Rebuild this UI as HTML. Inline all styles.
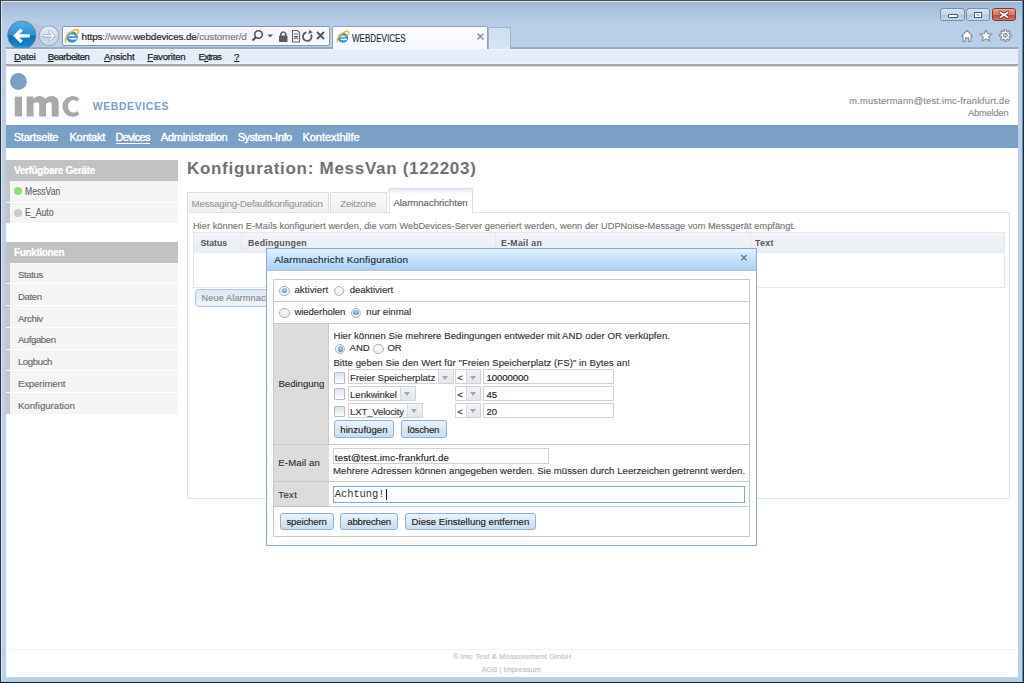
<!DOCTYPE html>
<html><head><meta charset="utf-8"><style>
html,body{margin:0;padding:0;width:1024px;height:683px;overflow:hidden;position:relative;font-family:"Liberation Sans",sans-serif}
u{text-decoration:underline}
.t{-webkit-text-stroke:0.15px currentColor}
</style></head><body>
<div style="position:absolute;left:0px;top:0px;width:1024px;height:683px;background:#b9d0e8"></div>
<div style="position:absolute;left:0px;top:0px;width:1024px;height:47px;background:linear-gradient(#9bb4d1 0px,#a9c1dc 10px,#b6cce5 20px,#b9d0e8 30px,#b9d0e8 47px)"></div>
<div style="position:absolute;left:0px;top:0px;width:1024px;height:1px;background:#4a4d52"></div>
<div style="position:absolute;left:0px;top:1px;width:1024px;height:1px;background:#dbe6f2"></div>
<div style="position:absolute;left:0px;top:0px;width:1px;height:683px;background:#2e3035"></div>
<div style="position:absolute;left:1px;top:1px;width:1px;height:682px;background:#dfe9f4"></div>
<div style="position:absolute;left:1023px;top:0px;width:1px;height:683px;background:#1b2a2e"></div>
<div style="position:absolute;left:1022px;top:1px;width:1px;height:682px;background:#5b8fb0"></div>
<div style="position:absolute;left:0px;top:682px;width:1024px;height:1px;background:#10242a"></div>
<div style="position:absolute;left:1px;top:681px;width:1022px;height:1px;background:#8fd8ea"></div>
<div style="position:absolute;left:6px;top:46px;width:1012px;height:1px;background:#b7d1ea"></div>
<div style="position:absolute;left:6px;top:47px;width:1012px;height:2px;background:#98abc1"></div>
<div style="position:absolute;left:6px;top:49px;width:1012px;height:1px;background:#eef5fc"></div>
<div style="position:absolute;left:6px;top:50px;width:1012px;height:14px;background:#e5edf8"></div>
<div style="position:absolute;left:6px;top:63px;width:1012px;height:1px;background:#ebf3fb"></div>
<div style="position:absolute;left:6px;top:64px;width:1012px;height:2px;background:#a2a6ab"></div>
<div style="position:absolute;left:6px;top:66px;width:1012px;height:1px;background:#d9dbde"></div>
<div style="position:absolute;left:6px;top:67px;width:1012px;height:610px;background:#fff"></div>
<div style="position:absolute;left:940px;top:8px;width:25px;height:13px;border-radius:3px;border:1px solid #7b8fa6;box-sizing:border-box;background:linear-gradient(#d9e6f3,#c2d5ea 50%,#aec6e0 51%,#c4d8ec)"></div>
<div style="position:absolute;left:948px;top:14px;width:8px;height:2px;background:#fff;border:1px solid #4d5c6d;border-radius:1px;box-sizing:content-box"></div>
<div style="position:absolute;left:966px;top:8px;width:24px;height:13px;border-radius:3px;border:1px solid #7b8fa6;box-sizing:border-box;background:linear-gradient(#d9e6f3,#c2d5ea 50%,#aec6e0 51%,#c4d8ec)"></div>
<div style="position:absolute;left:974px;top:11.5px;width:8px;height:6px;background:#6a7a8c;border:1px solid #4d5c6d;box-shadow:inset 0 0 0 1.5px #fff;box-sizing:border-box"></div>
<div style="position:absolute;left:992px;top:8px;width:24px;height:13px;border-radius:3px;border:1px solid #7d3a33;box-sizing:border-box;background:linear-gradient(#e9a99b,#d77462 50%,#c2432d 51%,#d8785f)"></div>
<svg style="position:absolute;left:998px;top:9px" width="12" height="11" viewBox="0 0 12 11"><path d="M2.3 3.4 L9.7 8.2 M9.7 3.4 L2.3 8.2" stroke="#5a2a25" stroke-width="3.2" stroke-linecap="round"/><path d="M2.3 3.4 L9.7 8.2 M9.7 3.4 L2.3 8.2" stroke="#fff" stroke-width="1.8" stroke-linecap="round"/></svg>
<svg style="position:absolute;left:958px;top:28px" width="60" height="16" viewBox="0 0 60 16">
<g stroke="#8a929b" stroke-width="1.2" stroke-linejoin="round" fill="#fff">
<path d="M3.6 8.2 L9 2.3 L14.4 8.2 L13 8.2 L13 13.3 L10.6 13.3 L10.6 9.8 L7.4 9.8 L7.4 13.3 L5 13.3 L5 8.2 Z"/>
<path d="M28.00 1.70 L29.70 5.65 L33.99 6.05 L30.76 8.90 L31.70 13.10 L28.00 10.90 L24.30 13.10 L25.24 8.90 L22.01 6.05 L26.30 5.65 Z"/>
<path d="M51.48 6.38 L53.21 6.38 L53.21 8.42 L51.48 8.42 L50.98 9.63 L52.20 10.86 L50.76 12.30 L49.53 11.08 L48.32 11.58 L48.32 13.31 L46.28 13.31 L46.28 11.58 L45.07 11.08 L43.84 12.30 L42.40 10.86 L43.62 9.63 L43.12 8.42 L41.39 8.42 L41.39 6.38 L43.12 6.38 L43.62 5.17 L42.40 3.94 L43.84 2.50 L45.07 3.72 L46.28 3.22 L46.28 1.49 L48.32 1.49 L48.32 3.22 L49.53 3.72 L50.76 2.50 L52.20 3.94 L50.98 5.17 Z"/>
</g>
<circle cx="47.3" cy="7.4" r="1.9" fill="#b9d0e8" stroke="#8a929b" stroke-width="1.1"/>
</svg>
<svg style="position:absolute;left:6px;top:19px" width="56" height="29" viewBox="0 0 56 29">
<defs>
<linearGradient id="bk" x1="0" y1="0" x2="0" y2="1"><stop offset="0" stop-color="#52b0ea"/><stop offset="0.5" stop-color="#2a90d6"/><stop offset="0.52" stop-color="#0c70bf"/><stop offset="0.85" stop-color="#1a80cc"/><stop offset="1" stop-color="#4aa8e4"/></linearGradient>
<linearGradient id="fw" x1="0" y1="0" x2="0" y2="1"><stop offset="0" stop-color="#e3ecf6"/><stop offset="0.5" stop-color="#d3e0ee"/><stop offset="0.52" stop-color="#c3d4e6"/><stop offset="1" stop-color="#d0deec"/></linearGradient>
</defs>
<path d="M16 2.5 Q26 2.5 33 6 Q38 8.5 43 6.8 L49 6.8 L49 27 L16 27 Z" fill="#b2c5da"/>
<circle cx="43" cy="16.7" r="9.8" fill="url(#fw)" stroke="#97a6b6" stroke-width="1"/>
<path d="M38.3 16.8 H47.3 M43.8 12.6 L47.8 16.8 L43.8 21" fill="none" stroke="#a3b1c0" stroke-width="3.2" stroke-linecap="round" stroke-linejoin="round"/>
<path d="M38.3 16.8 H47.3 M43.8 12.6 L47.8 16.8 L43.8 21" fill="none" stroke="#f4f7fb" stroke-width="1.6" stroke-linecap="round" stroke-linejoin="round"/>
<circle cx="15.8" cy="16.2" r="14.1" fill="url(#bk)" stroke="#6b8199" stroke-width="1"/>
<path d="M9.6 16.8 H23.8 M15.6 10.6 L9.4 16.8 L15.6 23" fill="none" stroke="#fff" stroke-width="3.3" stroke-linecap="butt" stroke-linejoin="miter"/>
</svg>
<div style="position:absolute;left:62px;top:26px;width:268px;height:20px;box-sizing:border-box;border:1px solid #8396ab;border-radius:2px;background:#f3f6fa;box-shadow:inset 0 0 0 1px #fff"></div>
<svg style="position:absolute;left:64px;top:28px" width="16" height="16" viewBox="0 0 16 16">
<ellipse cx="8" cy="9" rx="5.8" ry="5.6" fill="#2d8fd8"/>
<ellipse cx="8" cy="9" rx="3.4" ry="2.8" fill="#e8f4fc"/>
<rect x="4.6" y="8.3" width="7" height="1.6" fill="#2d8fd8"/>
<rect x="8.6" y="9.9" width="4" height="1.6" fill="#f3f6fa"/>
<path d="M2 14 Q0 10 6 5 Q12 0 14 2 Q15.5 4 12 7" fill="none" stroke="#f2b619" stroke-width="1.5"/>
</svg>
<svg style="position:absolute;left:250px;top:28px" width="78" height="16" viewBox="0 0 78 16">
<g fill="none" stroke="#555" stroke-width="1.6"><circle cx="8.5" cy="6.5" r="3.8"/><path d="M5.8 9.2 L2.5 12.5" stroke-width="2"/></g>
<path d="M17.5 6.5 L23 6.5 L20.25 9.5 Z" fill="#555"/>
<g fill="#5a5a5a"><rect x="29" y="7.5" width="8.5" height="6.5" rx="1"/></g>
<path d="M30.8 8 V5.8 Q33.25 2.2 35.7 5.8 V8" fill="none" stroke="#5a5a5a" stroke-width="1.6"/>
<g fill="none" stroke="#6a6a6a" stroke-width="1.1"><path d="M42.5 2.5 H47.5 L49.5 4.5 V14 H42.5 Z"/><path d="M44 6 H48 M44 8.5 H48 M44 11 L46 9.5 L48 11"/></g>
<path d="M61 6.5 A4.3 4.3 0 1 1 56.4 4.4" fill="none" stroke="#5a5a5a" stroke-width="1.8"/>
<path d="M59.5 1.5 L62.5 4.5 L58.5 6 Z" fill="#5a5a5a"/>
<path d="M67 4 L74 11 M74 4 L67 11" stroke="#555" stroke-width="1.8"/>
</svg>
<div style="position:absolute;left:332px;top:26px;width:156px;height:23px;box-sizing:border-box;border:1px solid #8ea3ba;border-bottom:none;border-radius:2px 2px 0 0;background:linear-gradient(#fdfeff,#f4f7fb)"></div>
<svg style="position:absolute;left:336px;top:30px" width="14" height="14" viewBox="0 0 16 16">
<ellipse cx="8" cy="9" rx="5.8" ry="5.6" fill="#2d8fd8"/>
<ellipse cx="8" cy="9" rx="3.4" ry="2.8" fill="#e8f4fc"/>
<rect x="4.6" y="8.3" width="7" height="1.6" fill="#2d8fd8"/>
<rect x="8.6" y="9.9" width="4" height="1.6" fill="#fff"/>
<path d="M2 14 Q0 10 6 5 Q12 0 14 2 Q15.5 4 12 7" fill="none" stroke="#f2b619" stroke-width="1.5"/>
</svg>
<svg style="position:absolute;left:476px;top:32px" width="9" height="9" viewBox="0 0 9 9"><path d="M1.5 1.5 L7.5 7.5 M7.5 1.5 L1.5 7.5" stroke="#8a8a8a" stroke-width="1.4"/></svg>
<div style="position:absolute;left:488px;top:27px;width:23px;height:22px;box-sizing:border-box;border:1px solid #9fb3c9;border-bottom:none;border-radius:2px 2px 0 0;background:linear-gradient(#cfdff0,#d8e6f4)"></div>
<div id="t0" class="t" style="position:absolute;left:14px;top:52.27px;font:normal 9.6px/1 'Liberation Sans', sans-serif;color:#1e1e1e;white-space:nowrap;letter-spacing:-0.125px;-webkit-text-stroke:0.25px #1e1e1e;"><u>D</u>atei</div>
<div id="t1" class="t" style="position:absolute;left:47.7px;top:52.27px;font:normal 9.6px/1 'Liberation Sans', sans-serif;color:#1e1e1e;white-space:nowrap;letter-spacing:-0.467px;-webkit-text-stroke:0.25px #1e1e1e;"><u>B</u>earbeiten</div>
<div id="t2" class="t" style="position:absolute;left:104.1px;top:52.27px;font:normal 9.6px/1 'Liberation Sans', sans-serif;color:#1e1e1e;white-space:nowrap;letter-spacing:-0.167px;-webkit-text-stroke:0.25px #1e1e1e;"><u>A</u>nsicht</div>
<div id="t3" class="t" style="position:absolute;left:147.3px;top:52.27px;font:normal 9.6px/1 'Liberation Sans', sans-serif;color:#1e1e1e;white-space:nowrap;letter-spacing:-0.200px;-webkit-text-stroke:0.25px #1e1e1e;"><u>F</u>avoriten</div>
<div id="t4" class="t" style="position:absolute;left:198.6px;top:52.27px;font:normal 9.6px/1 'Liberation Sans', sans-serif;color:#1e1e1e;white-space:nowrap;letter-spacing:-0.820px;-webkit-text-stroke:0.25px #1e1e1e;">E<u>x</u>tras</div>
<div id="t5" class="t" style="position:absolute;left:234.1px;top:52.27px;font:normal 9.6px/1 'Liberation Sans', sans-serif;color:#1e1e1e;white-space:nowrap;letter-spacing:0.000px;-webkit-text-stroke:0.25px #1e1e1e;"><u>?</u></div>
<div id="t6" class="t" style="position:absolute;left:81.6px;top:32.12px;font:normal 9.9px/1 'Liberation Sans', sans-serif;color:#222;white-space:nowrap;letter-spacing:-0.143px;">https<span style="color:#7a7a7a">://www.</span>webdevices.de<span style="color:#7a7a7a">/customer/d</span></div>
<div id="t7" class="t" style="position:absolute;left:352.2px;top:33.50px;font:normal 10.4px/1 'Liberation Sans', sans-serif;color:#1e2a4a;white-space:nowrap;letter-spacing:0.000px;transform:scaleX(0.775);transform-origin:0 0;">WEBDEVICES</div>
<svg style="position:absolute;left:6px;top:67px" width="90" height="55" viewBox="6 67 90 55">
<circle cx="18.4" cy="81.5" r="8.4" fill="#7aa0c5"/>
<g fill="#a9a9a9">
<rect x="14.8" y="96.6" width="7.3" height="19.8"/>
<path d="M26.6 116.4 V96.4 H33.4 V98.6 Q35.6 96.0 39.3 96.0 Q43.2 96.0 45.0 98.8 Q47.4 96.0 51.5 96.0 Q58.7 96.0 58.7 103.5 V116.4 H51.7 V104.6 Q51.7 102.2 49.3 102.2 Q46.1 102.2 46.1 105.0 V116.4 H39.2 V104.6 Q39.2 102.2 36.6 102.2 Q33.5 102.2 33.5 105.0 V116.4 Z"/>
</g>
<path d="M79.4 98.6 A10.3 10.35 0 1 0 79.4 114.3 L77.3 111 A5.6 6.3 0 1 1 77.3 101.6 Z" fill="#a9a9a9"/>
</svg>
<div id="t8" class="b" style="position:absolute;left:92.8px;top:101.70px;font:bold 10.4px/1 'Liberation Sans', sans-serif;color:#7b9fc3;white-space:nowrap;letter-spacing:0.644px;">WEBDEVICES</div>
<div id="t9" class="t" style="position:absolute;left:849.3px;top:96.71px;font:normal 9.2px/1 'Liberation Sans', sans-serif;color:#8a8a8a;white-space:nowrap;letter-spacing:0.258px;">m.mustermann@test.imc-frankfurt.de</div>
<div id="t10" class="t" style="position:absolute;left:968px;top:108.71px;font:normal 9.2px/1 'Liberation Sans', sans-serif;color:#8a8a8a;white-space:nowrap;letter-spacing:-0.114px;">Abmelden</div>
<div style="position:absolute;left:6px;top:125px;width:1012px;height:23px;background:#7aa0c6"></div>
<div id="t11" class="t" style="position:absolute;left:13.7px;top:132.39px;font:normal 11px/1 'Liberation Sans', sans-serif;color:#fff;white-space:nowrap;letter-spacing:-0.200px;-webkit-text-stroke:0.4px #fff;">Startseite</div>
<div id="t12" class="t" style="position:absolute;left:69.4px;top:132.39px;font:normal 11px/1 'Liberation Sans', sans-serif;color:#fff;white-space:nowrap;letter-spacing:-0.233px;-webkit-text-stroke:0.4px #fff;">Kontakt</div>
<div id="t13" class="t" style="position:absolute;left:115.6px;top:132.39px;font:normal 11px/1 'Liberation Sans', sans-serif;color:#fff;white-space:nowrap;letter-spacing:-0.717px;-webkit-text-stroke:0.4px #fff;">Devices</div>
<div id="t14" class="t" style="position:absolute;left:160.8px;top:132.39px;font:normal 11px/1 'Liberation Sans', sans-serif;color:#fff;white-space:nowrap;letter-spacing:-0.215px;-webkit-text-stroke:0.4px #fff;">Administration</div>
<div id="t15" class="t" style="position:absolute;left:237.7px;top:132.39px;font:normal 11px/1 'Liberation Sans', sans-serif;color:#fff;white-space:nowrap;letter-spacing:-0.420px;-webkit-text-stroke:0.4px #fff;">System-Info</div>
<div id="t16" class="t" style="position:absolute;left:302.4px;top:132.39px;font:normal 11px/1 'Liberation Sans', sans-serif;color:#fff;white-space:nowrap;letter-spacing:-0.027px;-webkit-text-stroke:0.4px #fff;">Kontexthilfe</div>
<div style="position:absolute;left:115.6px;top:143.3px;width:34.3px;height:1px;background:#fff"></div>
<div style="position:absolute;left:6px;top:160.3px;width:172px;height:20.7px;background:#c2c2c2"></div>
<div id="t17" class="b" style="position:absolute;left:14px;top:165.84px;font:bold 10px/1 'Liberation Sans', sans-serif;color:#fff;white-space:nowrap;letter-spacing:-0.331px;-webkit-text-stroke:0.2px #fff;">Verfügbare Geräte</div>
<div style="position:absolute;left:6px;top:181px;width:172px;height:21.4px;background:#f5f5f5"></div>
<div style="position:absolute;left:6px;top:181px;width:4px;height:21.4px;background:#c6c6c6"></div>
<div style="position:absolute;left:6px;top:202.4px;width:172px;height:1px;background:#fff"></div>
<div style="position:absolute;left:6px;top:203.4px;width:172px;height:20px;background:#f5f5f5"></div>
<div style="position:absolute;left:6px;top:203.4px;width:4px;height:20px;background:#c6c6c6"></div>
<div style="position:absolute;left:14px;top:186.8px;width:8px;height:8px;border-radius:50%;background:#8ddf77"></div>
<div style="position:absolute;left:14px;top:208.6px;width:8px;height:8px;border-radius:50%;background:#c9c9c9"></div>
<div id="t18" class="t" style="position:absolute;left:24.75px;top:186.63px;font:normal 10px/1 'Liberation Sans', sans-serif;color:#666;white-space:nowrap;letter-spacing:0.000px;transform:scaleX(0.86);transform-origin:0 0;">MessVan</div>
<div id="t19" class="t" style="position:absolute;left:24.75px;top:208.28px;font:normal 10px/1 'Liberation Sans', sans-serif;color:#666;white-space:nowrap;letter-spacing:0.000px;transform:scaleX(0.87);transform-origin:0 0;">E_Auto</div>
<div style="position:absolute;left:6px;top:242px;width:172px;height:20.5px;background:#c2c2c2"></div>
<div id="t20" class="b" style="position:absolute;left:13.9px;top:248.03px;font:bold 10px/1 'Liberation Sans', sans-serif;color:#fff;white-space:nowrap;letter-spacing:-0.344px;-webkit-text-stroke:0.2px #fff;">Funktionen</div>
<div style="position:absolute;left:6px;top:262.5px;width:172px;height:20.75px;background:#f5f5f5"></div>
<div style="position:absolute;left:6px;top:262.5px;width:4px;height:20.75px;background:#c6c6c6"></div>
<div id="t21" class="t" style="position:absolute;left:17.9px;top:270.17px;font:normal 9.6px/1 'Liberation Sans', sans-serif;color:#6a6a6a;white-space:nowrap;letter-spacing:-0.360px;">Status</div>
<div style="position:absolute;left:6px;top:284.25px;width:172px;height:20.75px;background:#f5f5f5"></div>
<div style="position:absolute;left:6px;top:284.25px;width:4px;height:20.75px;background:#c6c6c6"></div>
<div id="t22" class="t" style="position:absolute;left:17.9px;top:291.92px;font:normal 9.6px/1 'Liberation Sans', sans-serif;color:#6a6a6a;white-space:nowrap;letter-spacing:-0.375px;">Daten</div>
<div style="position:absolute;left:6px;top:306px;width:172px;height:20.75px;background:#f5f5f5"></div>
<div style="position:absolute;left:6px;top:306px;width:4px;height:20.75px;background:#c6c6c6"></div>
<div id="t23" class="t" style="position:absolute;left:17.9px;top:313.67px;font:normal 9.6px/1 'Liberation Sans', sans-serif;color:#6a6a6a;white-space:nowrap;letter-spacing:-0.280px;">Archiv</div>
<div style="position:absolute;left:6px;top:327.75px;width:172px;height:20.75px;background:#f5f5f5"></div>
<div style="position:absolute;left:6px;top:327.75px;width:4px;height:20.75px;background:#c6c6c6"></div>
<div id="t24" class="t" style="position:absolute;left:17.9px;top:335.42px;font:normal 9.6px/1 'Liberation Sans', sans-serif;color:#6a6a6a;white-space:nowrap;letter-spacing:-0.429px;">Aufgaben</div>
<div style="position:absolute;left:6px;top:349.5px;width:172px;height:20.75px;background:#f5f5f5"></div>
<div style="position:absolute;left:6px;top:349.5px;width:4px;height:20.75px;background:#c6c6c6"></div>
<div id="t25" class="t" style="position:absolute;left:17.9px;top:357.17px;font:normal 9.6px/1 'Liberation Sans', sans-serif;color:#6a6a6a;white-space:nowrap;letter-spacing:-0.383px;">Logbuch</div>
<div style="position:absolute;left:6px;top:371.25px;width:172px;height:20.75px;background:#f5f5f5"></div>
<div style="position:absolute;left:6px;top:371.25px;width:4px;height:20.75px;background:#c6c6c6"></div>
<div id="t26" class="t" style="position:absolute;left:17.9px;top:378.92px;font:normal 9.6px/1 'Liberation Sans', sans-serif;color:#6a6a6a;white-space:nowrap;letter-spacing:-0.111px;">Experiment</div>
<div style="position:absolute;left:6px;top:393px;width:172px;height:20.75px;background:#f5f5f5"></div>
<div style="position:absolute;left:6px;top:393px;width:4px;height:20.75px;background:#c6c6c6"></div>
<div id="t27" class="t" style="position:absolute;left:17.9px;top:400.67px;font:normal 9.6px/1 'Liberation Sans', sans-serif;color:#6a6a6a;white-space:nowrap;letter-spacing:0.025px;">Konfiguration</div>
<div id="t28" class="b" style="position:absolute;left:186.9px;top:160.11px;font:bold 17px/1 'Liberation Sans', sans-serif;color:#727272;white-space:nowrap;letter-spacing:0.720px;">Konfiguration: MessVan (122203)</div>
<div style="position:absolute;left:186.5px;top:192px;width:142px;height:21px;box-sizing:border-box;border:1px solid #dcdcdc;border-bottom:none;background:linear-gradient(#fafafa,#efefef)"></div>
<div id="t29" class="t" style="position:absolute;left:191.6px;top:198.67px;font:normal 9.6px/1 'Liberation Sans', sans-serif;color:#9a9a9a;white-space:nowrap;letter-spacing:-0.124px;">Messaging-Defaultkonfiguration</div>
<div style="position:absolute;left:330px;top:192px;width:57px;height:21px;box-sizing:border-box;border:1px solid #dcdcdc;border-bottom:none;background:linear-gradient(#fafafa,#efefef)"></div>
<div id="t30" class="t" style="position:absolute;left:340.3px;top:198.67px;font:normal 9.6px/1 'Liberation Sans', sans-serif;color:#9a9a9a;white-space:nowrap;letter-spacing:-0.143px;">Zeitzone</div>
<div style="position:absolute;left:186.5px;top:212px;width:823.5px;height:287px;box-sizing:border-box;border:1px solid #dfe3e8;background:#fff"></div>
<div style="position:absolute;left:388.5px;top:187.5px;width:84.5px;height:26px;box-sizing:border-box;border:1px solid #d6dde6;border-bottom:none;border-radius:2px 2px 0 0;background:linear-gradient(#e3edf8 0px,#fff 5px,#fff)"></div>
<div id="t31" class="t" style="position:absolute;left:393.4px;top:198.17px;font:normal 9.6px/1 'Liberation Sans', sans-serif;color:#666;white-space:nowrap;letter-spacing:-0.033px;">Alarmnachrichten</div>
<div id="t32" class="t" style="position:absolute;left:192.9px;top:221.71px;font:normal 9.2px/1 'Liberation Sans', sans-serif;color:#777;white-space:nowrap;letter-spacing:0.068px;">Hier können E-Mails konfiguriert werden, die vom WebDevices-Server generiert werden, wenn der UDPNoise-Message vom Messgerät empfängt.</div>
<div style="position:absolute;left:193px;top:232px;width:811.5px;height:55.5px;box-sizing:border-box;border:1px solid #e8e8e8;background:#fff"></div>
<div style="position:absolute;left:194px;top:233px;width:809.5px;height:20px;background:linear-gradient(#f2f5f9,#e7edf4)"></div>
<div style="position:absolute;left:241px;top:233px;width:1px;height:20px;background:#efe6da"></div>
<div style="position:absolute;left:495px;top:233px;width:1px;height:20px;background:#efe6da"></div>
<div style="position:absolute;left:750px;top:233px;width:1px;height:20px;background:#efe6da"></div>
<div id="t33" class="b" style="position:absolute;left:200.4px;top:239.05px;font:bold 8.8px/1 'Liberation Sans', sans-serif;color:#555;white-space:nowrap;letter-spacing:-0.020px;">Status</div>
<div id="t34" class="b" style="position:absolute;left:247.9px;top:239.05px;font:bold 8.8px/1 'Liberation Sans', sans-serif;color:#555;white-space:nowrap;letter-spacing:0.260px;">Bedingungen</div>
<div id="t35" class="b" style="position:absolute;left:501px;top:239.05px;font:bold 8.8px/1 'Liberation Sans', sans-serif;color:#555;white-space:nowrap;letter-spacing:0.275px;">E-Mail an</div>
<div id="t36" class="b" style="position:absolute;left:755px;top:239.05px;font:bold 8.8px/1 'Liberation Sans', sans-serif;color:#555;white-space:nowrap;letter-spacing:0.333px;">Text</div>
<div style="position:absolute;left:194.5px;top:289.3px;width:120px;height:17.7px;box-sizing:border-box;border:1px solid #adc6e2;border-radius:4px;background:linear-gradient(#dde9f6,#eef4fb)"></div>
<div id="t37" class="t" style="position:absolute;left:201.5px;top:294.21px;font:normal 9.2px/1 'Liberation Sans', sans-serif;color:#8a8a8a;white-space:nowrap;letter-spacing:0.000px;letter-spacing:0.1px;">Neue Alarmnachricht</div>
<div style="position:absolute;left:6px;top:649px;width:1012px;height:1px;background:#f2f2f2"></div>
<div id="t38" class="t" style="position:absolute;left:452.9px;top:653.15px;font:normal 7.5px/1 'Liberation Sans', sans-serif;color:#c2c2c2;white-space:nowrap;letter-spacing:0.171px;">© imc Test &amp; Measurement GmbH</div>
<div id="t39" class="t" style="position:absolute;left:481.7px;top:666.15px;font:normal 7.5px/1 'Liberation Sans', sans-serif;color:#c2c2c2;white-space:nowrap;letter-spacing:-0.007px;">AGB | Impressum</div>
<div style="position:absolute;left:266px;top:248px;width:491px;height:297.5px;box-sizing:border-box;border:1px solid #88abcf;background:#fff"></div>
<div style="position:absolute;left:267px;top:249px;width:489px;height:19.8px;background:linear-gradient(#e4f1fd,#c8e2fa 45%,#aad2f8)"></div>
<div style="position:absolute;left:267px;top:268.8px;width:489px;height:1.8px;background:#b3c8db"></div>
<div id="t40" class="t" style="position:absolute;left:274.2px;top:254.82px;font:normal 9.9px/1 'Liberation Sans', sans-serif;color:#1f2a36;white-space:nowrap;letter-spacing:0.259px;">Alarmnachricht Konfiguration</div>
<svg style="position:absolute;left:740px;top:253.5px" width="8" height="8" viewBox="0 0 8 8"><path d="M1.2 1 L6.6 6.4 M6.6 1 L1.2 6.4" stroke="#56789a" stroke-width="1.3"/></svg>
<div style="position:absolute;left:273.4px;top:278.5px;width:476.6px;height:258px;box-sizing:border-box;border:1px solid #c9c9c9;background:#fff"></div>
<div style="position:absolute;left:274.4px;top:301px;width:475px;height:1px;background:#c9c9c9"></div>
<div style="position:absolute;left:274.4px;top:323px;width:475px;height:1px;background:#c9c9c9"></div>
<div style="position:absolute;left:274.4px;top:324px;width:54.3px;height:120px;background:#dcdcdc"></div>
<div style="position:absolute;left:328.2px;top:324px;width:1px;height:182px;background:#c9c9c9"></div>
<div style="position:absolute;left:274.4px;top:444px;width:475px;height:1px;background:#c9c9c9"></div>
<div style="position:absolute;left:274.4px;top:445px;width:54.3px;height:36px;background:#dcdcdc"></div>
<div style="position:absolute;left:274.4px;top:481px;width:475px;height:1px;background:#c9c9c9"></div>
<div style="position:absolute;left:274.4px;top:482px;width:54.3px;height:24px;background:#dcdcdc"></div>
<div style="position:absolute;left:274.4px;top:506px;width:475px;height:1px;background:#c9c9c9"></div>
<div style="position:absolute;left:279.3px;top:285.5px;width:10.4px;height:10.4px;box-sizing:border-box;border-radius:50%;border:1px solid #aab3bc;background:radial-gradient(circle at 50% 35%,#fdfeff,#e3e9ef)"></div><div style="position:absolute;left:281.7px;top:287.9px;width:5.6px;height:5.6px;border-radius:50%;background:radial-gradient(circle at 50% 35%,#b3d6f3,#5a9ad2 70%,#4c8cc8)"></div>
<div style="position:absolute;left:334px;top:285.5px;width:10.4px;height:10.4px;box-sizing:border-box;border-radius:50%;border:1px solid #aab3bc;background:radial-gradient(circle at 50% 35%,#fdfeff,#e3e9ef)"></div>
<div id="t41" class="t" style="position:absolute;left:294.4px;top:285.07px;font:normal 9.6px/1 'Liberation Sans', sans-serif;color:#333;white-space:nowrap;letter-spacing:0.100px;">aktiviert</div>
<div id="t42" class="t" style="position:absolute;left:349.7px;top:285.07px;font:normal 9.6px/1 'Liberation Sans', sans-serif;color:#333;white-space:nowrap;letter-spacing:-0.030px;">deaktiviert</div>
<div style="position:absolute;left:279.3px;top:307.5px;width:10.4px;height:10.4px;box-sizing:border-box;border-radius:50%;border:1px solid #aab3bc;background:radial-gradient(circle at 50% 35%,#fdfeff,#e3e9ef)"></div>
<div style="position:absolute;left:351px;top:307.5px;width:10.4px;height:10.4px;box-sizing:border-box;border-radius:50%;border:1px solid #aab3bc;background:radial-gradient(circle at 50% 35%,#fdfeff,#e3e9ef)"></div><div style="position:absolute;left:353.4px;top:309.9px;width:5.6px;height:5.6px;border-radius:50%;background:radial-gradient(circle at 50% 35%,#b3d6f3,#5a9ad2 70%,#4c8cc8)"></div>
<div id="t43" class="t" style="position:absolute;left:294.4px;top:307.17px;font:normal 9.6px/1 'Liberation Sans', sans-serif;color:#333;white-space:nowrap;letter-spacing:-0.080px;">wiederholen</div>
<div id="t44" class="t" style="position:absolute;left:366.3px;top:307.17px;font:normal 9.6px/1 'Liberation Sans', sans-serif;color:#333;white-space:nowrap;letter-spacing:0.011px;">nur einmal</div>
<div id="t45" class="t" style="position:absolute;left:278.4px;top:379.17px;font:normal 9.6px/1 'Liberation Sans', sans-serif;color:#333;white-space:nowrap;letter-spacing:0.000px;">Bedingung</div>
<div id="t46" class="t" style="position:absolute;left:333.4px;top:330.67px;font:normal 9.6px/1 'Liberation Sans', sans-serif;color:#333;white-space:nowrap;letter-spacing:0.063px;">Hier können Sie mehrere Bedingungen entweder mit AND oder OR verküpfen.</div>
<div style="position:absolute;left:335.1px;top:343.7px;width:10.4px;height:10.4px;box-sizing:border-box;border-radius:50%;border:1px solid #aab3bc;background:radial-gradient(circle at 50% 35%,#fdfeff,#e3e9ef)"></div><div style="position:absolute;left:337.5px;top:346.1px;width:5.6px;height:5.6px;border-radius:50%;background:radial-gradient(circle at 50% 35%,#b3d6f3,#5a9ad2 70%,#4c8cc8)"></div>
<div style="position:absolute;left:373.3px;top:343.7px;width:10.4px;height:10.4px;box-sizing:border-box;border-radius:50%;border:1px solid #aab3bc;background:radial-gradient(circle at 50% 35%,#fdfeff,#e3e9ef)"></div>
<div id="t47" class="t" style="position:absolute;left:349.5px;top:343.37px;font:normal 9.6px/1 'Liberation Sans', sans-serif;color:#333;white-space:nowrap;letter-spacing:0.000px;">AND</div>
<div id="t48" class="t" style="position:absolute;left:387.4px;top:343.37px;font:normal 9.6px/1 'Liberation Sans', sans-serif;color:#333;white-space:nowrap;letter-spacing:0.000px;">OR</div>
<div id="t49" class="t" style="position:absolute;left:333.4px;top:357.67px;font:normal 9.6px/1 'Liberation Sans', sans-serif;color:#333;white-space:nowrap;letter-spacing:0.069px;">Bitte geben Sie den Wert für "Freien Speicherplatz (FS)" in Bytes an!</div>
<div style="position:absolute;left:333.7px;top:371.9px;width:11.5px;height:11.7px;box-sizing:border-box;border:1px solid #b3bac2;border-radius:1px;background:linear-gradient(#d6e3ef,#eef3f8 60%,#fbfcfe)"></div>
<div style="position:absolute;left:348.1px;top:369.4px;width:105.5px;height:15px;box-sizing:border-box;border:1px solid #d0d4d8;background:#fff"></div>
<div style="position:absolute;left:438.1px;top:370.4px;width:14.5px;height:13px;box-sizing:border-box;border-left:1px solid #d6d9dc;background:linear-gradient(#f3f3f3,#e6e6e6)"></div>
<div style="position:absolute;left:441.85px;top:375.6px;width:0;height:0;border-left:3.5px solid transparent;border-right:3.5px solid transparent;border-top:4px solid #8eaacb"></div>
<div id="t50" class="t" style="position:absolute;left:350.1px;top:373.37px;font:normal 9.6px/1 'Liberation Sans', sans-serif;color:#333;white-space:nowrap;letter-spacing:-0.037px;">Freier Speicherplatz</div>
<div style="position:absolute;left:455.3px;top:369.4px;width:26.1px;height:15px;box-sizing:border-box;border:1px solid #d0d4d8;background:#fff"></div>
<div style="position:absolute;left:466.4px;top:370.4px;width:14px;height:13px;box-sizing:border-box;border-left:1px solid #d6d9dc;background:linear-gradient(#f3f3f3,#e6e6e6)"></div>
<div style="position:absolute;left:469.9px;top:375.6px;width:0;height:0;border-left:3.5px solid transparent;border-right:3.5px solid transparent;border-top:4px solid #8eaacb"></div>
<div id="t51" class="t" style="position:absolute;left:457.3px;top:373.37px;font:normal 9.6px/1 'Liberation Sans', sans-serif;color:#333;white-space:nowrap;letter-spacing:0.000px;"><</div>
<div style="position:absolute;left:483.4px;top:369.4px;width:130.2px;height:15px;box-sizing:border-box;border:1px solid #cdd3da;background:#fff"></div>
<div id="t52" class="t" style="position:absolute;left:486.4px;top:373.17px;font:normal 9.6px/1 'Liberation Sans', sans-serif;color:#222;white-space:nowrap;letter-spacing:-0.086px;">10000000</div>
<div style="position:absolute;left:333.7px;top:388.3px;width:11.5px;height:11.7px;box-sizing:border-box;border:1px solid #b3bac2;border-radius:1px;background:linear-gradient(#d6e3ef,#eef3f8 60%,#fbfcfe)"></div>
<div style="position:absolute;left:348.1px;top:385.9px;width:67.7px;height:15px;box-sizing:border-box;border:1px solid #d0d4d8;background:#fff"></div>
<div style="position:absolute;left:400.3px;top:386.9px;width:14.5px;height:13px;box-sizing:border-box;border-left:1px solid #d6d9dc;background:linear-gradient(#f3f3f3,#e6e6e6)"></div>
<div style="position:absolute;left:404.05px;top:392.1px;width:0;height:0;border-left:3.5px solid transparent;border-right:3.5px solid transparent;border-top:4px solid #8eaacb"></div>
<div id="t53" class="t" style="position:absolute;left:350.1px;top:389.87px;font:normal 9.6px/1 'Liberation Sans', sans-serif;color:#333;white-space:nowrap;letter-spacing:-0.067px;">Lenkwinkel</div>
<div style="position:absolute;left:455.3px;top:385.9px;width:26.1px;height:15px;box-sizing:border-box;border:1px solid #d0d4d8;background:#fff"></div>
<div style="position:absolute;left:466.4px;top:386.9px;width:14px;height:13px;box-sizing:border-box;border-left:1px solid #d6d9dc;background:linear-gradient(#f3f3f3,#e6e6e6)"></div>
<div style="position:absolute;left:469.9px;top:392.1px;width:0;height:0;border-left:3.5px solid transparent;border-right:3.5px solid transparent;border-top:4px solid #8eaacb"></div>
<div id="t54" class="t" style="position:absolute;left:457.3px;top:389.87px;font:normal 9.6px/1 'Liberation Sans', sans-serif;color:#333;white-space:nowrap;letter-spacing:0.000px;"><</div>
<div style="position:absolute;left:483.4px;top:385.9px;width:130.2px;height:15px;box-sizing:border-box;border:1px solid #cdd3da;background:#fff"></div>
<div id="t55" class="t" style="position:absolute;left:486.4px;top:389.67px;font:normal 9.6px/1 'Liberation Sans', sans-serif;color:#222;white-space:nowrap;letter-spacing:0.000px;">45</div>
<div style="position:absolute;left:333.7px;top:405.7px;width:11.5px;height:11.7px;box-sizing:border-box;border:1px solid #b3bac2;border-radius:1px;background:linear-gradient(#d6e3ef,#eef3f8 60%,#fbfcfe)"></div>
<div style="position:absolute;left:348.1px;top:402.9px;width:74.5px;height:15px;box-sizing:border-box;border:1px solid #d0d4d8;background:#fff"></div>
<div style="position:absolute;left:407.1px;top:403.9px;width:14.5px;height:13px;box-sizing:border-box;border-left:1px solid #d6d9dc;background:linear-gradient(#f3f3f3,#e6e6e6)"></div>
<div style="position:absolute;left:410.85px;top:409.1px;width:0;height:0;border-left:3.5px solid transparent;border-right:3.5px solid transparent;border-top:4px solid #8eaacb"></div>
<div id="t56" class="t" style="position:absolute;left:350.1px;top:406.87px;font:normal 9.6px/1 'Liberation Sans', sans-serif;color:#333;white-space:nowrap;letter-spacing:-0.182px;">LXT_Velocity</div>
<div style="position:absolute;left:455.3px;top:402.9px;width:26.1px;height:15px;box-sizing:border-box;border:1px solid #d0d4d8;background:#fff"></div>
<div style="position:absolute;left:466.4px;top:403.9px;width:14px;height:13px;box-sizing:border-box;border-left:1px solid #d6d9dc;background:linear-gradient(#f3f3f3,#e6e6e6)"></div>
<div style="position:absolute;left:469.9px;top:409.1px;width:0;height:0;border-left:3.5px solid transparent;border-right:3.5px solid transparent;border-top:4px solid #8eaacb"></div>
<div id="t57" class="t" style="position:absolute;left:457.3px;top:406.87px;font:normal 9.6px/1 'Liberation Sans', sans-serif;color:#333;white-space:nowrap;letter-spacing:0.000px;"><</div>
<div style="position:absolute;left:483.4px;top:402.9px;width:130.2px;height:15px;box-sizing:border-box;border:1px solid #cdd3da;background:#fff"></div>
<div id="t58" class="t" style="position:absolute;left:486.4px;top:406.67px;font:normal 9.6px/1 'Liberation Sans', sans-serif;color:#222;white-space:nowrap;letter-spacing:0.000px;">20</div>
<div style="position:absolute;left:334.1px;top:420.3px;width:60.1px;height:17.9px;box-sizing:border-box;border:1px solid #90b2d6;border-radius:3px;background:linear-gradient(#edf4fb,#d9e7f6 50%,#c9dcf1)"></div>
<div id="t59" class="t" style="position:absolute;left:340.3px;top:425.07px;font:normal 9.6px/1 'Liberation Sans', sans-serif;color:#222;white-space:nowrap;letter-spacing:0.033px;">hinzufügen</div>
<div style="position:absolute;left:400.8px;top:420.3px;width:46.1px;height:17.9px;box-sizing:border-box;border:1px solid #90b2d6;border-radius:3px;background:linear-gradient(#edf4fb,#d9e7f6 50%,#c9dcf1)"></div>
<div id="t60" class="t" style="position:absolute;left:407.5px;top:425.07px;font:normal 9.6px/1 'Liberation Sans', sans-serif;color:#222;white-space:nowrap;letter-spacing:-0.200px;">löschen</div>
<div id="t61" class="t" style="position:absolute;left:278.3px;top:458.47px;font:normal 9.6px/1 'Liberation Sans', sans-serif;color:#333;white-space:nowrap;letter-spacing:0.125px;">E-Mail an</div>
<div style="position:absolute;left:332.8px;top:448.3px;width:216px;height:15.7px;box-sizing:border-box;border:1px solid #cdd3da;background:#fff"></div>
<div id="t62" class="t" style="position:absolute;left:334.8px;top:452.67px;font:normal 9.6px/1 'Liberation Sans', sans-serif;color:#222;white-space:nowrap;letter-spacing:0.164px;">test@test.imc-frankfurt.de</div>
<div id="t63" class="t" style="position:absolute;left:333px;top:466.47px;font:normal 9.6px/1 'Liberation Sans', sans-serif;color:#333;white-space:nowrap;letter-spacing:0.035px;">Mehrere Adressen können angegeben werden. Sie müssen durch Leerzeichen getrennt werden.</div>
<div id="t64" class="t" style="position:absolute;left:278.3px;top:490.17px;font:normal 9.6px/1 'Liberation Sans', sans-serif;color:#333;white-space:nowrap;letter-spacing:0.333px;">Text</div>
<div style="position:absolute;left:333px;top:486px;width:412px;height:16.5px;box-sizing:border-box;border:1px solid #7ea7d1;background:#fff"></div>
<div id="t65" class="t" style="position:absolute;left:334.8px;top:488.81px;font:normal 10.5px/1 'Liberation Mono', monospace;color:#333;white-space:nowrap;letter-spacing:-0.100px;-webkit-text-stroke:0;">Achtung!</div>
<div style="position:absolute;left:385.5px;top:489px;width:1px;height:11px;background:#111"></div>
<div style="position:absolute;left:279.8px;top:512.6px;width:54.3px;height:17.9px;box-sizing:border-box;border:1px solid #90b2d6;border-radius:3px;background:linear-gradient(#edf4fb,#d9e7f6 50%,#c9dcf1)"></div>
<div id="t66" class="t" style="position:absolute;left:286.4px;top:516.87px;font:normal 9.6px/1 'Liberation Sans', sans-serif;color:#222;white-space:nowrap;letter-spacing:-0.137px;">speichern</div>
<div style="position:absolute;left:340.4px;top:512.6px;width:57.5px;height:17.9px;box-sizing:border-box;border:1px solid #90b2d6;border-radius:3px;background:linear-gradient(#edf4fb,#d9e7f6 50%,#c9dcf1)"></div>
<div id="t67" class="t" style="position:absolute;left:347.3px;top:516.87px;font:normal 9.6px/1 'Liberation Sans', sans-serif;color:#222;white-space:nowrap;letter-spacing:-0.188px;">abbrechen</div>
<div style="position:absolute;left:405.3px;top:512.6px;width:131px;height:17.9px;box-sizing:border-box;border:1px solid #90b2d6;border-radius:3px;background:linear-gradient(#edf4fb,#d9e7f6 50%,#c9dcf1)"></div>
<div id="t68" class="t" style="position:absolute;left:411.6px;top:516.87px;font:normal 9.6px/1 'Liberation Sans', sans-serif;color:#222;white-space:nowrap;letter-spacing:0.012px;">Diese Einstellung entfernen</div>
</body></html>
